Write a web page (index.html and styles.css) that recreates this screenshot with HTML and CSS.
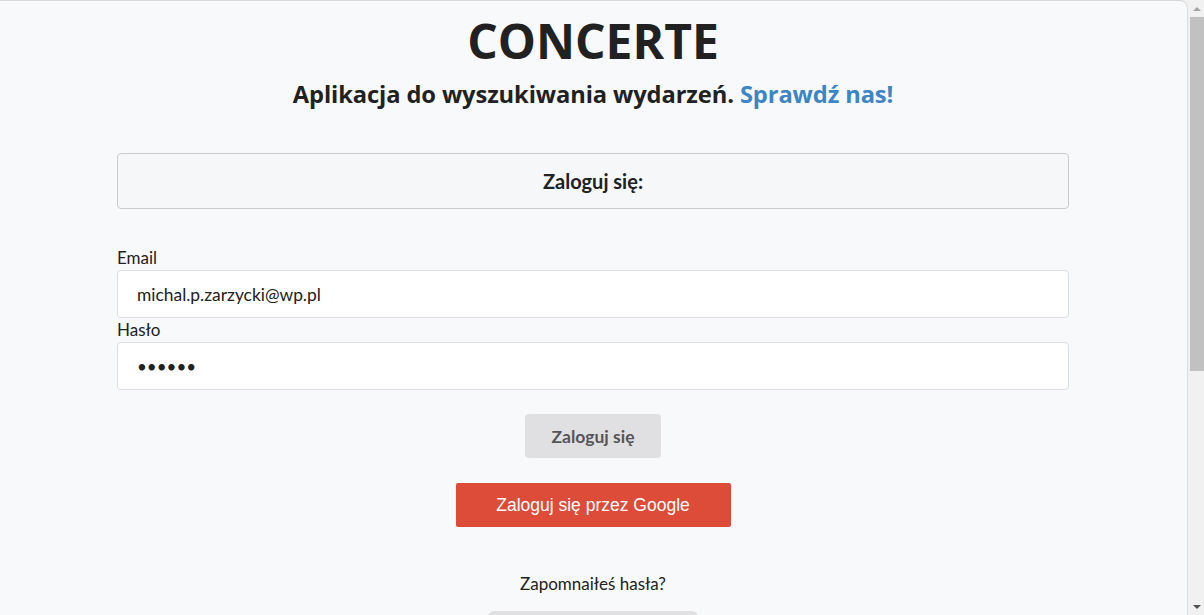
FILE: index.html
```html
<!DOCTYPE html>
<html lang="pl">
<head>
<meta charset="utf-8">
<title>Concerte</title>
<link rel="stylesheet" href="styles.css">
</head>
<body>
<div class="window">
  <main class="page">
    <header class="hero">
      <h1 class="brand">CONCERTE</h1>
      <p class="tagline">Aplikacja do wyszukiwania wydarzeń. <a class="tagline-link" href="#">Sprawdź nas!</a></p>
    </header>
    <section class="container">
      <div class="panel">Zaloguj się:</div>
      <form class="login-form">
        <label class="field-label" for="email">Email</label>
        <input class="field-input" id="email" type="text" value="michal.p.zarzycki@wp.pl">
        <label class="field-label" for="pass">Hasło</label>
        <input class="field-input field-pass" id="pass" type="password" value="haslo1">
        <div class="actions">
          <button class="btn btn-login" type="button">Zaloguj się</button>
          <button class="btn btn-google" type="button">Zaloguj się przez Google</button>
          <p class="forgot">Zapomnaiłeś hasła?</p>
          <button class="btn btn-reset" type="button">&nbsp;</button>
        </div>
      </form>
    </section>
  </main>
  <div class="scrollbar">
    <span class="arrow arrow-up"></span>
    <span class="thumb"></span>
    <span class="track"></span>
    <span class="arrow arrow-down"></span>
  </div>
</div>
</body>
</html>
```

FILE: styles.css
```css
* { box-sizing: border-box; }
html, body { margin: 0; padding: 0; height: 100%; overflow: hidden; }
body {
  background: #f1f1f1;
  font-family: Lato, "Open Sans", sans-serif;
  color: #212529;
}
.window {
  display: flex;
  height: 615px;
  width: 1204px;
}
.page {
  flex: 1;
  background: #f8f9fa;
  border-top: 1px solid #d6d8db;
  border-right: 1px solid #dcdde0;
  border-top-right-radius: 8px;
  overflow: hidden;
  padding: 0 118px 0 117px;
}
.hero {
  text-align: center;
  padding-top: 9px;
}
.brand {
  margin: 0;
  font-family: "Open Sans", sans-serif;
  font-weight: 700;
  font-size: 48px;
  line-height: 62px;
  letter-spacing: 0;
  color: #212121;
}
.tagline {
  margin: 6px 0 0;
  font-family: "Open Sans", sans-serif;
  font-weight: 700;
  font-size: 23.7px;
  line-height: 32px;
  color: #212121;
  letter-spacing: -0.1px;
}
.tagline-link {
  color: #3d85c6;
  text-decoration: none;
}
.container {
  padding-top: 43px;
}
.panel {
  height: 56px;
  border: 1px solid #c9cbce;
  border-radius: 4px;
  background: #f6f7f9;
  display: flex;
  align-items: center;
  justify-content: center;
  font-weight: 700;
  font-size: 20px;
  color: #212121;
}
.login-form {
  display: flex;
  flex-direction: column;
  padding-top: 38px;
}
.field-label {
  font-size: 17px;
  line-height: 22px;
  color: #212121;
  margin-bottom: 1px;
}
.field-input {
  height: 48px;
  border: 1px solid #dcdee1;
  border-radius: 4px;
  background: #fff;
  padding: 0 19px;
  font-family: Lato, sans-serif;
  font-size: 17.4px;
  color: #212121;
  margin-bottom: 1px;
}
.field-pass {
  font-size: 17px;
  letter-spacing: 0;
}
.actions {
  display: flex;
  flex-direction: column;
  align-items: center;
  padding-top: 23px;
}
.btn {
  border: none;
  cursor: pointer;
}
.btn-login {
  width: 136px;
  height: 44px;
  border-radius: 4px;
  background: #e0e0e2;
  color: #555558;
  font-family: Lato, sans-serif;
  font-weight: 700;
  font-size: 17.5px;
}
.btn-google {
  margin-top: 25px;
  width: 275px;
  height: 44px;
  border-radius: 2px;
  background: #dd4b39;
  color: #fff;
  font-family: "Liberation Sans", Arial, sans-serif;
  font-size: 17.5px;
}
.forgot {
  margin: 46px 0 0;
  font-size: 17px;
  line-height: 22px;
  color: #212121;
}
.btn-reset {
  margin-top: 16px;
  width: 210px;
  height: 44px;
  border-radius: 6px;
  background: #e0e0e2;
}
.scrollbar {
  width: 16px;
  display: flex;
  flex-direction: column;
  background: #f1f1f1;
  padding-left: 2px;
}
.arrow {
  height: 17px;
  display: flex;
  align-items: center;
  justify-content: center;
}
.arrow::before {
  content: "";
  width: 0;
  height: 0;
  border-left: 4px solid transparent;
  border-right: 4px solid transparent;
}
.arrow-up::before { border-bottom: 4px solid #a3a3a3; }
.arrow-down::before { border-top: 4px solid #505050; }
.thumb {
  height: 354px;
  background: #c1c1c1;
}
.track { flex: 1; }
```
